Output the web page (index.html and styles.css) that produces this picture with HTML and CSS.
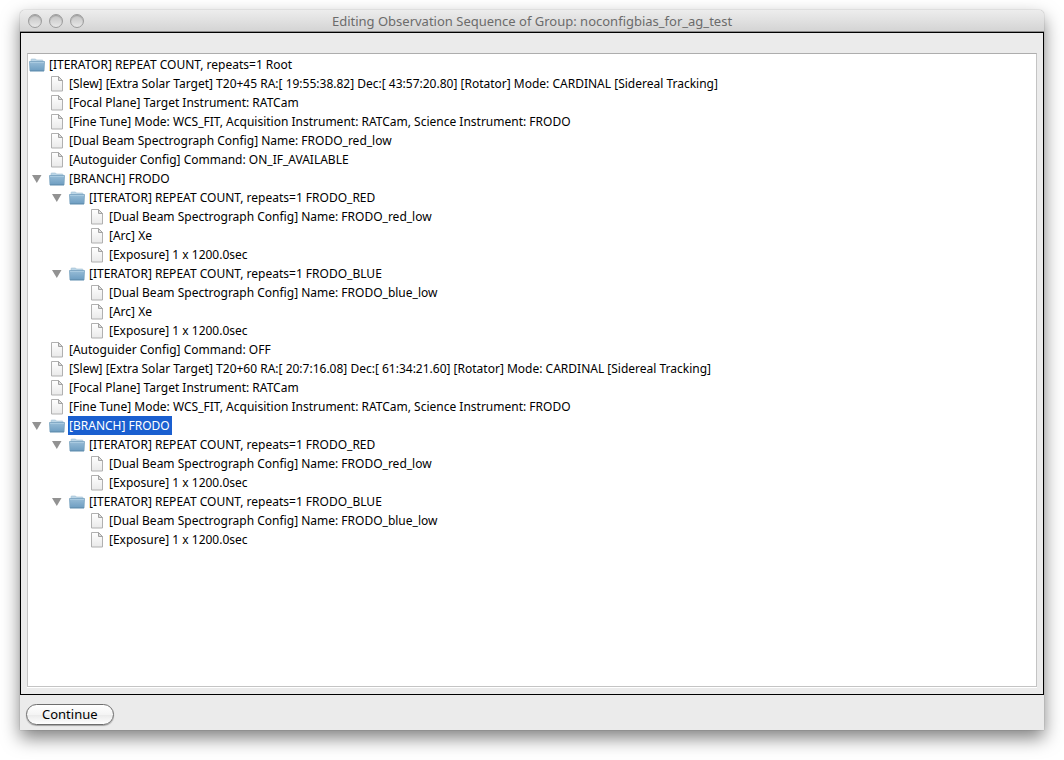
FILE: index.html
```html
<!DOCTYPE html>
<html lang="en">
<head>
<meta charset="UTF-8">
<meta name="viewport" content="width=device-width, initial-scale=1">
<title>Editing Observation Sequence of Group: noconfigbias_for_ag_test</title>
<link rel="stylesheet" href="styles.css">
</head>
<body>

<!-- Shared icons -->
<svg class="sprite" aria-hidden="true">
  <defs>
    <linearGradient id="folderFill" x1="0" y1="0" x2="0" y2="1">
      <stop offset="0" stop-color="#98bdd7"/>
      <stop offset="1" stop-color="#6d9dc1"/>
    </linearGradient>
    <linearGradient id="fileFill" x1="0" y1="0" x2="0" y2="1">
      <stop offset="0" stop-color="#ffffff"/>
      <stop offset="1" stop-color="#e9e9e9"/>
    </linearGradient>
  </defs>
  <symbol id="folder" viewBox="0 0 16 16">
    <path d="M2 5V2.800Q2 2 2.800 2H6.500l1 1h5.700q.8 0 .8.800V5z" fill="#bcd6e7" stroke="#9dbdd2" stroke-width=".6"/>
    <path d="M.5 4.500h15L15 14H1z" fill="url(#folderFill)" stroke="#7aa3c0" stroke-width=".8"/>
    <path d="M1 5.500h14" stroke="#a9cae0"/>
    <path d="M1 13.800h14" stroke="#5886a8" stroke-width=".8"/>
  </symbol>
  <symbol id="file" viewBox="0 0 16 16">
    <path d="M2.500.5h7l4 4v10.500h-11z" fill="url(#fileFill)" stroke="#b0b0b0"/>
    <path d="M9.500.5v4h4z" fill="#dedede" stroke="#a3a3a3" stroke-linejoin="round"/>
  </symbol>
  <symbol id="arrow" viewBox="0 0 16 16">
    <path d="M3 4h9.500l-4.700 8z" fill="#929292"/>
  </symbol>
</svg>

<div class="window">
  <header class="titlebar">
    <div class="lights">
      <button type="button" class="light" aria-label="Close"></button>
      <button type="button" class="light" aria-label="Minimize"></button>
      <button type="button" class="light" aria-label="Zoom"></button>
    </div>
    <h1 class="title">Editing Observation Sequence of Group: noconfigbias_for_ag_test</h1>
  </header>

  <main class="panel">
    <div class="tree">
      <div class="row"><svg class="icon"><use href="#folder"/></svg><span class="label">[ITERATOR] REPEAT COUNT, repeats=1 Root</span></div>
      <ul class="branch">
        <li class="row leaf"><svg class="icon"><use href="#file"/></svg><span class="label">[Slew] [Extra Solar Target] T20+45 RA:[ 19:55:38.82] Dec:[ 43:57:20.80] [Rotator] Mode: CARDINAL [Sidereal Tracking]</span></li>
        <li class="row leaf"><svg class="icon"><use href="#file"/></svg><span class="label">[Focal Plane] Target Instrument: RATCam</span></li>
        <li class="row leaf"><svg class="icon"><use href="#file"/></svg><span class="label">[Fine Tune] Mode: WCS_FIT, Acquisition Instrument: RATCam, Science Instrument: FRODO</span></li>
        <li class="row leaf"><svg class="icon"><use href="#file"/></svg><span class="label">[Dual Beam Spectrograph Config] Name: FRODO_red_low</span></li>
        <li class="row leaf"><svg class="icon"><use href="#file"/></svg><span class="label">[Autoguider Config] Command: ON_IF_AVAILABLE</span></li>
        <li>
          <details open>
            <summary class="row"><svg class="arrow"><use href="#arrow"/></svg><svg class="icon"><use href="#folder"/></svg><span class="label">[BRANCH] FRODO</span></summary>
            <ul class="branch nested">
              <li>
                <details open>
                  <summary class="row"><svg class="arrow"><use href="#arrow"/></svg><svg class="icon"><use href="#folder"/></svg><span class="label">[ITERATOR] REPEAT COUNT, repeats=1 FRODO_RED</span></summary>
                  <ul class="branch nested">
                    <li class="row leaf"><svg class="icon"><use href="#file"/></svg><span class="label">[Dual Beam Spectrograph Config] Name: FRODO_red_low</span></li>
                    <li class="row leaf"><svg class="icon"><use href="#file"/></svg><span class="label">[Arc] Xe</span></li>
                    <li class="row leaf"><svg class="icon"><use href="#file"/></svg><span class="label">[Exposure] 1 x 1200.0sec</span></li>
                  </ul>
                </details>
              </li>
              <li>
                <details open>
                  <summary class="row"><svg class="arrow"><use href="#arrow"/></svg><svg class="icon"><use href="#folder"/></svg><span class="label">[ITERATOR] REPEAT COUNT, repeats=1 FRODO_BLUE</span></summary>
                  <ul class="branch nested">
                    <li class="row leaf"><svg class="icon"><use href="#file"/></svg><span class="label">[Dual Beam Spectrograph Config] Name: FRODO_blue_low</span></li>
                    <li class="row leaf"><svg class="icon"><use href="#file"/></svg><span class="label">[Arc] Xe</span></li>
                    <li class="row leaf"><svg class="icon"><use href="#file"/></svg><span class="label">[Exposure] 1 x 1200.0sec</span></li>
                  </ul>
                </details>
              </li>
            </ul>
          </details>
        </li>
        <li class="row leaf"><svg class="icon"><use href="#file"/></svg><span class="label">[Autoguider Config] Command: OFF</span></li>
        <li class="row leaf"><svg class="icon"><use href="#file"/></svg><span class="label">[Slew] [Extra Solar Target] T20+60 RA:[ 20:7:16.08] Dec:[ 61:34:21.60] [Rotator] Mode: CARDINAL [Sidereal Tracking]</span></li>
        <li class="row leaf"><svg class="icon"><use href="#file"/></svg><span class="label">[Focal Plane] Target Instrument: RATCam</span></li>
        <li class="row leaf"><svg class="icon"><use href="#file"/></svg><span class="label">[Fine Tune] Mode: WCS_FIT, Acquisition Instrument: RATCam, Science Instrument: FRODO</span></li>
        <li>
          <details open>
            <summary class="row"><svg class="arrow"><use href="#arrow"/></svg><svg class="icon"><use href="#folder"/></svg><span class="label selected">[BRANCH] FRODO</span></summary>
            <ul class="branch nested">
              <li>
                <details open>
                  <summary class="row"><svg class="arrow"><use href="#arrow"/></svg><svg class="icon"><use href="#folder"/></svg><span class="label">[ITERATOR] REPEAT COUNT, repeats=1 FRODO_RED</span></summary>
                  <ul class="branch nested">
                    <li class="row leaf"><svg class="icon"><use href="#file"/></svg><span class="label">[Dual Beam Spectrograph Config] Name: FRODO_red_low</span></li>
                    <li class="row leaf"><svg class="icon"><use href="#file"/></svg><span class="label">[Exposure] 1 x 1200.0sec</span></li>
                  </ul>
                </details>
              </li>
              <li>
                <details open>
                  <summary class="row"><svg class="arrow"><use href="#arrow"/></svg><svg class="icon"><use href="#folder"/></svg><span class="label">[ITERATOR] REPEAT COUNT, repeats=1 FRODO_BLUE</span></summary>
                  <ul class="branch nested">
                    <li class="row leaf"><svg class="icon"><use href="#file"/></svg><span class="label">[Dual Beam Spectrograph Config] Name: FRODO_blue_low</span></li>
                    <li class="row leaf"><svg class="icon"><use href="#file"/></svg><span class="label">[Exposure] 1 x 1200.0sec</span></li>
                  </ul>
                </details>
              </li>
            </ul>
          </details>
        </li>
      </ul>
    </div>
  </main>

  <footer class="actions">
    <button type="button" class="continue">Continue</button>
  </footer>
</div>

</body>
</html>
```
FILE: styles.css
```css
* {
    margin: 0;
    padding: 0;
    box-sizing: border-box;
}

body {
    display: flex;
    min-height: 100vh;
    padding: 10px 20px 30px;
    background: #fff;
    color: #000;
    font-family: "Lucida Grande", "Noto Sans", sans-serif;
    font-size: 12px;
}

.sprite {
    position: absolute;
    width: 0;
    height: 0;
}

.window {
    flex: 1;
    display: flex;
    flex-direction: column;
    min-width: 0;
    background: #ebebeb;
    border-radius: 5px 5px 0 0;
    box-shadow: 0 0 1px rgba(0, 0, 0, 0.5), 0 8px 18px rgba(0, 0, 0, 0.5);
}

/* Title bar */
.titlebar {
    display: grid;
    grid-template-columns: 64px 1fr 64px;
    align-items: center;
    height: 22px;
    border-bottom: 1px solid #8c8c8c;
    border-radius: 5px 5px 0 0;
    background: linear-gradient(#ededed, #d4d4d4);
}

.lights {
    display: flex;
    gap: 7px;
    padding-left: 8px;
}

.light {
    width: 14px;
    height: 14px;
    border: 1px solid #9c9c9c;
    border-radius: 50%;
    background: linear-gradient(#c2c2c2, #e8e8e8);
    box-shadow: inset 0 1px 1px rgba(0, 0, 0, 0.2);
}

.title {
    color: #6b6b6b;
    font-size: 13px;
    font-weight: normal;
    line-height: 20px;
    text-align: center;
    white-space: nowrap;
}

/* Sequence tree */
.panel {
    flex: 1;
    display: flex;
    padding: 20px 6px 7px;
    border: 1px solid #000;
}

.tree {
    flex: 1;
    min-width: 0;
    padding: 1px;
    border: 1px solid #c4c4c4;
    border-top-color: #adadad;
    box-shadow: 0 1px 0 #fff;
    background: #fff;
    overflow: hidden;
}

.branch {
    list-style: none;
}

.nested {
    padding-left: 20px;
}

.row {
    display: flex;
    align-items: center;
    height: 19px;
    list-style: none;
}

.leaf {
    padding-left: 20px;
}

.icon {
    flex: none;
    width: 16px;
    height: 16px;
    margin-right: 3px;
}

.arrow {
    flex: none;
    width: 16px;
    height: 16px;
    margin-right: 4px;
}

details:not([open]) > summary .arrow {
    transform: rotate(-90deg);
}

.label {
    padding: 0 2px 0 1px;
    line-height: 19px;
    white-space: nowrap;
}

.selected {
    background: #1a5fd0;
    color: #fff;
}

/* Bottom bar */
.actions {
    display: flex;
    padding: 9px 6px 5px;
}

.continue {
    height: 21px;
    padding: 0 15px;
    border: 1px solid #6e6e6e;
    border-radius: 11px;
    background: linear-gradient(#fff, #f4f4f4 50%, #e9e9e9 51%, #fff);
    box-shadow: 0 1px 1px rgba(0, 0, 0, 0.3);
    font: inherit;
    font-size: 13px;
    line-height: 19px;
}
```
